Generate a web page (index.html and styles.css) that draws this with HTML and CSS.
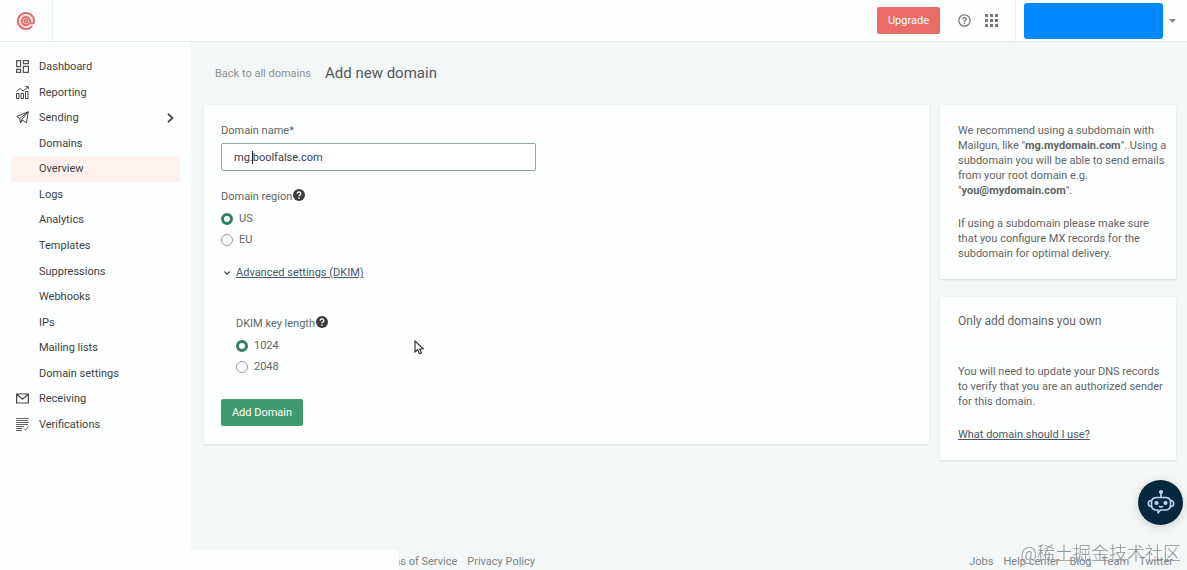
FILE: index.html
```html
<!DOCTYPE html>
<html lang="en">
<head>
    <meta charset="UTF-8">
    <meta name="viewport" content="width=device-width, initial-scale=1.0">
    <title>Add new domain</title>
    <link rel="stylesheet" href="styles.css">
</head>
<body>
    <header class="topbar">
        <a class="logo" href="#" aria-label="Home">
            <svg width="20" height="20" viewBox="0 0 20 20" fill="none" stroke="#e0696c" stroke-linecap="round">
                <circle cx="10" cy="10" r="8" fill="#fbdcdc" stroke="none"/>
                <circle cx="10" cy="10" r="1.600" stroke-width="1.800" fill="#fff"/>
                <path d="M15.600 15.900A8.100 8.100 0 1 1 18.100 10v1a2.100 2.100 0 0 1-4.100 0v-1a4.100 4.100 0 1 0-1.200 3" stroke-width="1.800"/>
            </svg>
        </a>
        <div class="tools">
            <button class="btn upgrade">Upgrade</button>
            <button class="icon-btn help-btn" aria-label="Help">
                <svg width="13" height="13" viewBox="0 0 13 13" fill="none" stroke="#777" stroke-width="1.200">
                    <circle cx="6.500" cy="6.500" r="5.700"/>
                    <path d="M4.800 5.200a1.700 1.700 0 1 1 2.700 1.300c-.7.500-1 .7-1 1.400M6.500 8.800v1.200"/>
                </svg>
            </button>
            <button class="icon-btn apps-btn" aria-label="Apps">
                <svg width="13" height="13" viewBox="0 0 13 13" fill="#777">
                    <path d="M0 0h3v3H0zM5 0h3v3H5zM10 0h3v3h-3zM0 5h3v3H0zM5 5h3v3H5zM10 5h3v3h-3zM0 10h3v3H0zM5 10h3v3H5zM10 10h3v3h-3z"/>
                </svg>
            </button>
            <div class="account">
                <span class="account-name"></span>
                <button class="icon-btn" aria-label="Account menu">
                    <svg width="7" height="4" viewBox="0 0 7 4" fill="#888"><path d="M0 0h7L3.500 4z"/></svg>
                </button>
            </div>
        </div>
    </header>

    <div class="layout">
        <nav class="sidebar">
            <ul>
                <li><a href="#">
                    <svg width="13" height="13" viewBox="0 0 13 13" fill="none" stroke="#555" stroke-width="1.200"><path d="M.6.6h4v6h-4zM7.400.6h5v3h-5zM7.400 6.400h5v6h-5zM.6 9.400h4v3h-4z"/></svg>
                    Dashboard</a></li>
                <li><a href="#">
                    <svg width="13" height="13" viewBox="0 0 13 13" fill="none" stroke="#444"><path d="M.5 7.500h2.500v5H.5zM5 7.500h2.500v5H5zM9.500 5.500h2.500v7H9.500zM.5 5.500l3.500-3 3 2.500 5-4.200M9.500.6h2.900v2.600"/></svg>
                    Reporting</a></li>
                <li><a href="#">
                    <svg width="13" height="13" viewBox="0 0 13 13" fill="none" stroke="#444" stroke-linejoin="round"><path d="M12.300.8L.7 5.500l3 2 .8 4.300 2-2.600 4 2.600zM12.300.8L3.700 7.500M12.300.8L5.800 8.600l.7.600M4.500 11.800l1.300-3.200"/></svg>
                    Sending
                    <svg class="chevron" width="7" height="10" viewBox="0 0 7 10" fill="none" stroke="#444" stroke-width="1.800"><path d="M1 .8L5.500 5 1 9.200"/></svg></a></li>
                <li><a class="sub" href="#">Domains</a></li>
                <li><a class="sub active" href="#">Overview</a></li>
                <li><a class="sub" href="#">Logs</a></li>
                <li><a class="sub" href="#">Analytics</a></li>
                <li><a class="sub" href="#">Templates</a></li>
                <li><a class="sub" href="#">Suppressions</a></li>
                <li><a class="sub" href="#">Webhooks</a></li>
                <li><a class="sub" href="#">IPs</a></li>
                <li><a class="sub" href="#">Mailing lists</a></li>
                <li><a class="sub" href="#">Domain settings</a></li>
                <li><a href="#">
                    <svg width="13" height="13" viewBox="0 0 13 13" fill="none" stroke="#444" stroke-width="1.200"><path d="M.6 2h11.800v9H.6zM.8 2.300l5.700 5 5.700-5"/></svg>
                    Receiving</a></li>
                <li><a href="#">
                    <svg width="13" height="13" viewBox="0 0 13 13" fill="none" stroke="#666"><path d="M0 .5h13M0 2.500h12M0 4.500h13M0 6.500h12M0 8.500h8M0 10.500h6M0 12.500h6M7.500 10.200l2 2 3-4.200"/></svg>
                    Verifications</a></li>
            </ul>
        </nav>

        <div class="page">
            <div class="page-head">
                <a href="#">Back to all domains</a>
                <h1>Add new domain</h1>
            </div>

            <div class="columns">
                <form class="card domain-form">
                    <label class="field-label" for="domain">Domain name*</label>
                    <div class="domain-field">
                        <input class="domain-input" type="text" id="domain" value="mg.boolfalse.com">
                        <span class="caret"></span>
                    </div>

                    <fieldset class="region">
                        <legend>Domain region
                            <svg width="12" height="12" viewBox="0 0 12 12"><circle cx="6" cy="6" r="6" fill="#3c3c3c"/><path d="M4.200 4.700a1.800 1.700 0 1 1 2.700 1.400c-.7.400-.9.600-.9 1.200M6 8.300v1.500" fill="none" stroke="#fff" stroke-width="1.400"/></svg>
                        </legend>
                        <label class="radio"><input type="radio" name="region" checked>US</label>
                        <label class="radio"><input type="radio" name="region">EU</label>
                    </fieldset>

                    <div class="advanced">
                        <svg width="6" height="4" viewBox="0 0 6 4" fill="none" stroke="#444" stroke-width="1.200"><path d="M.4.500L3 3.100 5.600.5"/></svg>
                        <a href="#">Advanced settings (DKIM)</a>
                    </div>

                    <fieldset class="dkim">
                        <legend>DKIM key length
                            <svg width="12" height="12" viewBox="0 0 12 12"><circle cx="6" cy="6" r="6" fill="#3c3c3c"/><path d="M4.200 4.700a1.800 1.700 0 1 1 2.700 1.400c-.7.400-.9.600-.9 1.200M6 8.300v1.500" fill="none" stroke="#fff" stroke-width="1.400"/></svg>
                        </legend>
                        <label class="radio"><input type="radio" name="dkim" checked>1024</label>
                        <label class="radio"><input type="radio" name="dkim">2048</label>
                    </fieldset>

                    <button type="button" class="btn add">Add Domain</button>
                </form>

                <aside class="tips">
                    <section class="card tip">
                        <p>We recommend using a subdomain with Mailgun, like "<b>mg.mydomain.com</b>". Using a subdomain you will be able to send emails from your root domain e.g. "<b>you@mydomain.com</b>".</p>
                        <p>If using a subdomain please make sure that you configure MX records for the subdomain for optimal delivery.</p>
                    </section>
                    <section class="card own">
                        <h2>Only add domains you own</h2>
                        <div class="tip">
                            <p>You will need to update your DNS records to verify that you are an authorized sender for this domain.</p>
                            <p><a href="#">What domain should I use?</a></p>
                        </div>
                    </section>
                </aside>
            </div>

            <footer class="footer">
                <a class="terms" href="#">Terms of Service</a>
                <a href="#">Privacy Policy</a>
                <a class="jobs" href="#">Jobs</a>
                <a href="#">Help center</a>
                <a href="#">Blog</a>
                <a href="#">Team</a>
                <a href="#">Twitter</a>
            </footer>
        </div>
    </div>

    <div class="status-bar"></div>
    <div class="watermark">@稀土掘金技术社区</div>

    <button class="chat" aria-label="Chat">
        <svg width="28" height="28" viewBox="0 0 28 28" fill="none" stroke="#b9d9ec" stroke-width="1.600" stroke-linejoin="round">
            <circle cx="14" cy="3" r="1.300" fill="#b9d9ec"/>
            <path d="M14 4v4M10 8.500h8c4 0 5.500 1.500 5.500 4.500v3c0 3.500-1.500 5-5.500 5h-4.500L11 24v-3h-1c-4 0-5.500-1.500-5.500-5v-3c0-3 1.500-4.500 5.500-4.500z"/>
            <path d="M4.300 11.500c-2 0-3 1-3 3s1 3 3 3M23.700 11.500c2 0 3 1 3 3s-1 3-3 3M12 17c1 1.200 3 1.200 4 0"/>
            <circle cx="9.500" cy="14" r="1.300" fill="#b9d9ec"/>
            <circle cx="18.500" cy="14" r="1.300" fill="#b9d9ec"/>
        </svg>
    </button>
    <svg class="pointer" width="10" height="15" viewBox="0 0 10 15" fill="#fff" stroke="#333" stroke-width="1.200"><path d="M1 1v11l2.600-2.200 1.900 4 2-1-1.900-3.700 3.600-.3z"/></svg>
</body>
</html>
```

FILE: styles.css
```css
* {
    box-sizing: border-box;
}
body {
    margin: 0;
    min-height: 100vh;
    display: flex;
    flex-direction: column;
    background-color: #fdfffe;
    color: #616565;
    font-family: Roboto, sans-serif;
    font-size: 11px;
    line-height: 15px;
}
h1, h2, p, ul {
    margin: 0;
    padding: 0;
    font-weight: 400;
}
a {
    color: inherit;
    text-decoration: none;
}
button, input {
    padding: 0;
    border: 0;
    font: inherit;
}
button {
    cursor: pointer;
}

/* top bar */
.topbar {
    display: flex;
    justify-content: space-between;
    height: 42px;
    border-bottom: 1px solid #e4e8e8;
}
.logo {
    display: flex;
    align-items: center;
    width: 53px;
    padding-left: 16px;
    border-right: 1px solid #eef1f1;
}
.tools {
    display: flex;
    align-items: center;
}
.btn {
    color: #fff;
    border-radius: 2px;
}
.upgrade {
    width: 63px;
    height: 27px;
    background-color: #e96d66;
}
.icon-btn {
    display: flex;
    background: none;
}
.help-btn {
    margin-left: 18px;
}
.apps-btn {
    margin-left: 14px;
}
.account {
    display: flex;
    align-items: center;
    gap: 6px;
    align-self: stretch;
    margin-left: 17px;
    padding: 0 11px 0 8px;
    border-left: 1px solid #eef1f1;
}
.account-name {
    width: 139px;
    height: 36px;
    border-radius: 3px;
    background-color: #0088ff;
}

/* sidebar */
.layout {
    display: flex;
    flex: 1;
}
.sidebar {
    width: 191px;
    padding: 12px 11px;
}
.sidebar ul {
    display: grid;
    grid-auto-rows: 1fr;
    min-height: 383px;
    list-style: none;
}
.sidebar a {
    display: flex;
    align-items: center;
    gap: 10px;
    height: 100%;
    padding: 0 6px 0 5px;
    color: #3b3f3f;
}
.sidebar .sub {
    padding-left: 28px;
}
.sidebar .active {
    background-color: #fff1ee;
    border-radius: 2px;
}
.chevron {
    margin-left: auto;
}

/* content */
.page {
    flex: 1;
    display: flex;
    flex-direction: column;
    padding: 0 11px 0 13px;
    background-color: #f3f7f7;
}
.page-head {
    display: flex;
    align-items: center;
    gap: 14px;
    height: 63px;
    padding-left: 11px;
    color: #8c9191;
}
.page-head h1 {
    font-size: 15px;
    color: #555959;
}
.columns {
    display: flex;
    align-items: flex-start;
    gap: 11px;
}
.card {
    background-color: #fdfffe;
    box-shadow: 0 1px 2px rgba(0, 0, 0, 0.1);
}
.domain-form {
    flex: 1;
    padding: 18px 17px;
}
.field-label {
    display: block;
    margin-bottom: 5px;
}
.domain-field {
    position: relative;
    max-width: 315px;
}
.domain-input {
    display: block;
    width: 100%;
    height: 28px;
    padding: 0 12px;
    border: 1px solid #86aa9f;
    border-radius: 2px;
    background-color: #fff;
    color: #36404a;
    outline: none;
}
.caret {
    position: absolute;
    left: 31px;
    top: 8px;
    width: 1px;
    height: 13px;
    background-color: #222;
}
fieldset {
    display: flex;
    flex-direction: column;
    gap: 6px;
    margin: 18px 0 0;
    padding: 0;
    border: 0;
}
legend {
    display: flex;
    gap: 1px;
    margin-bottom: 7px;
    padding: 0;
}
.radio {
    display: flex;
    align-items: center;
    gap: 6px;
}
.radio input {
    appearance: none;
    width: 12px;
    height: 12px;
    margin: 0;
    border: 1px solid #999;
    border-radius: 50%;
    background-color: #fff;
}
.radio input:checked {
    border: 3px solid #337f60;
}
.advanced {
    display: flex;
    align-items: center;
    gap: 6px;
    margin-top: 18px;
    padding-left: 3px;
}
.advanced a, .tip a {
    color: #47566a;
    text-decoration: underline;
}
.dkim {
    margin: 36px 0 0 15px;
}
.add {
    display: block;
    width: 82px;
    height: 27px;
    margin-top: 25px;
    background-color: #3f9b6d;
}

/* right column */
.tips {
    display: grid;
    gap: 18px;
    width: 236px;
}
.tip {
    display: grid;
    gap: 18px;
    padding: 18px 8px 18px 18px;
}
.own h2 {
    padding: 16px 18px;
    border-bottom: 1px solid #f5f8f8;
    font-size: 12px;
    line-height: 16px;
}

/* footer */
.footer {
    display: flex;
    align-items: center;
    gap: 10px;
    height: 17px;
    margin-top: auto;
    padding-right: 3px;
    color: #7b8488;
}
.terms {
    margin-left: 171px;
}
.jobs {
    margin-left: auto;
}

/* floating items */
.status-bar {
    position: fixed;
    left: 0;
    bottom: 0;
    width: 399px;
    height: 21px;
    border-radius: 0 3px 0 0;
    background-color: #fdfffe;
}
.watermark {
    position: fixed;
    right: 6px;
    bottom: 4px;
    color: #8d9191;
    font-family: Roboto, "Noto Sans CJK SC", sans-serif;
    font-size: 18px;
    font-weight: 300;
    line-height: 24px;
}
.chat {
    position: fixed;
    right: 4px;
    bottom: 45px;
    display: flex;
    align-items: center;
    justify-content: center;
    width: 45px;
    height: 45px;
    border-radius: 50%;
    background-color: #05283f;
    box-shadow: 0 2px 10px rgba(0, 0, 0, 0.15);
}
.pointer {
    position: fixed;
    left: 414px;
    top: 340px;
}
```
